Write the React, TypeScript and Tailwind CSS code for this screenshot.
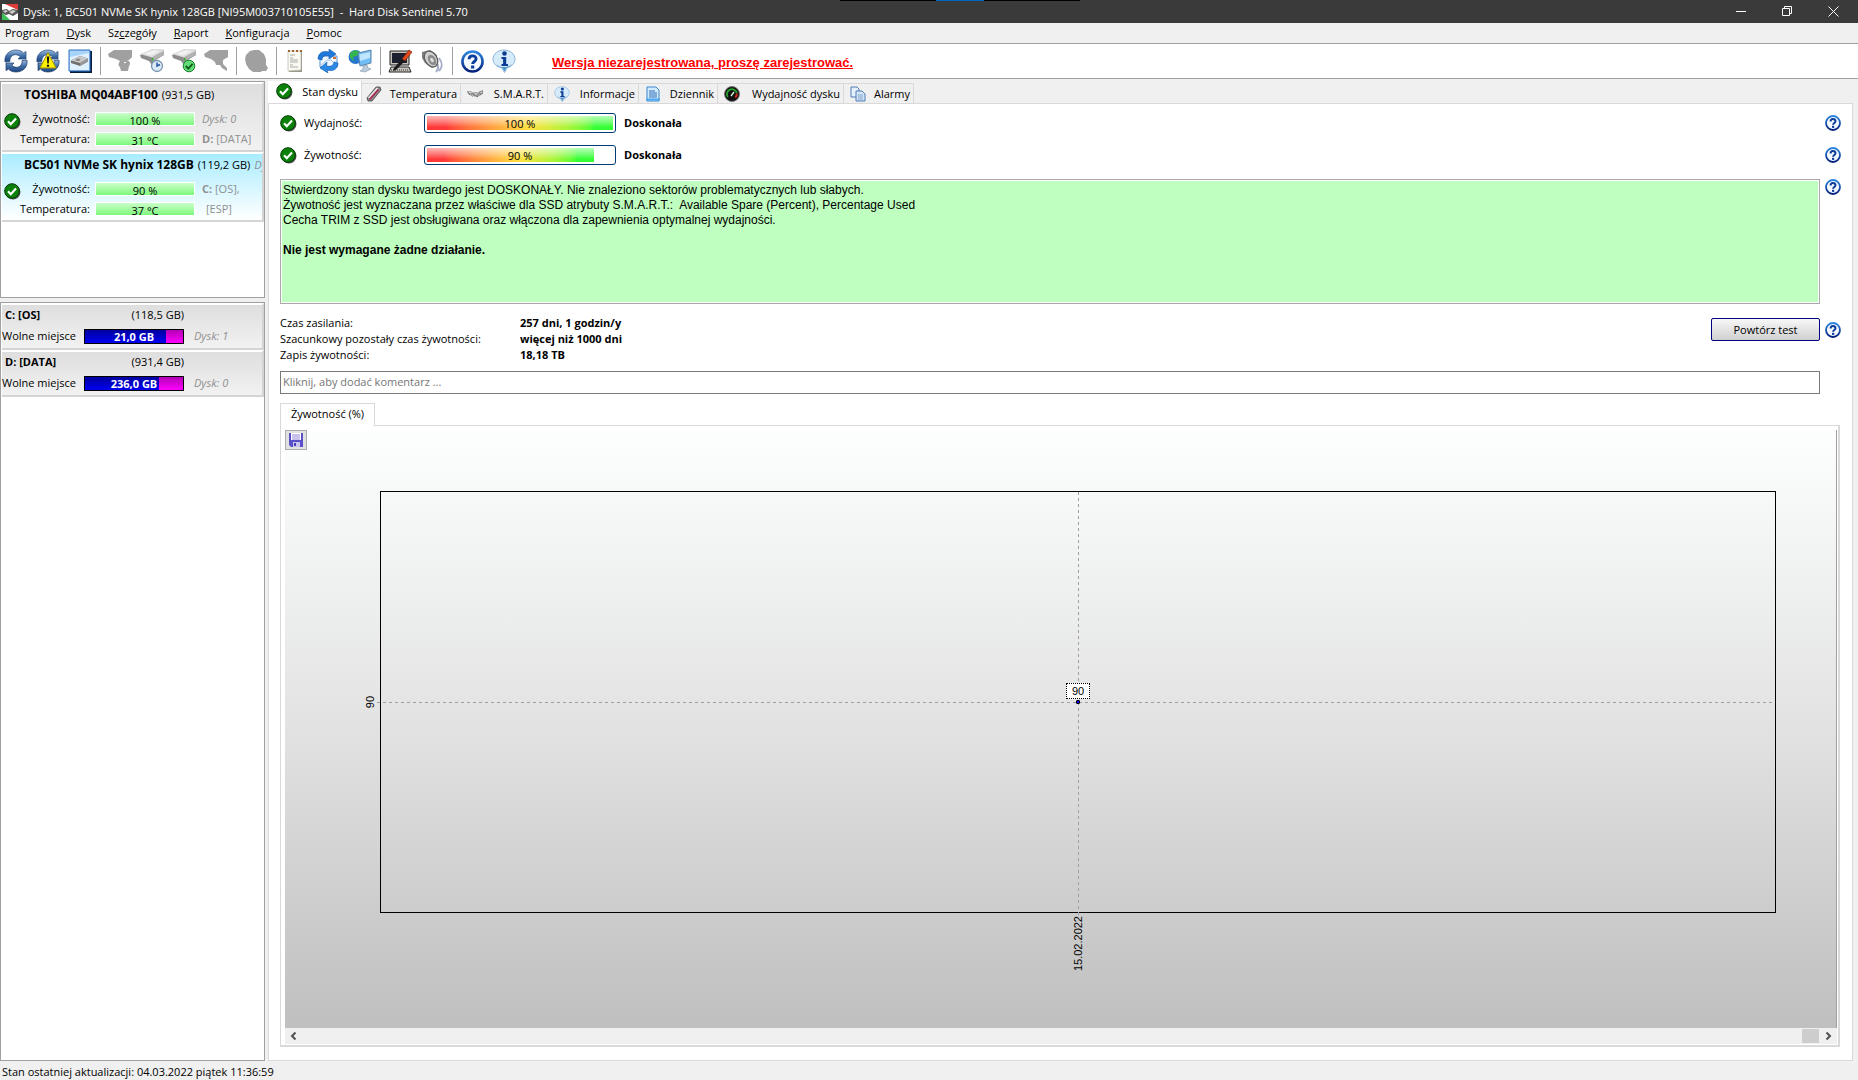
import React, { useState } from 'react';

interface DiskInfo {
  name: string;
  size: string;
  health: string;
  temp: string;
  extra?: string;
  side1: React.ReactNode;
  side2: React.ReactNode;
  selected?: boolean;
}

interface VolumeInfo {
  name: string;
  size: string;
  free: string;
  used: number;
  disk: string;
}

const DISKS: DiskInfo[] = [
  { name: 'TOSHIBA MQ04ABF100', size: '(931,5 GB)', health: '100 %', temp: '31 °C', side1: <i>Dysk: 0</i>, side2: <><b>D:</b> [DATA]</> },
  { name: 'BC501 NVMe SK hynix 128GB', size: '(119,2 GB)', health: '90 %', temp: '37 °C', extra: 'Dysk: 1', side1: <><b>C:</b> [OS],</>, side2: <span className="pl-1">[ESP]</span>, selected: true },
];

const VOLUMES: VolumeInfo[] = [
  { name: 'C: [OS]', size: '(118,5 GB)', free: '21,0 GB', used: 83, disk: 'Dysk: 1' },
  { name: 'D: [DATA]', size: '(931,4 GB)', free: '236,0 GB', used: 76, disk: 'Dysk: 0' },
];

// text before, underlined mnemonic, text after
const MENU = [
  ['Pro', 'g', 'ram'],
  ['', 'D', 'ysk'],
  ['Sz', 'c', 'zegóły'],
  ['', 'R', 'aport'],
  ['', 'K', 'onfiguracja'],
  ['', 'P', 'omoc'],
];

function CheckIcon() {
  return (
    <svg width="17" height="17" viewBox="0 0 17 17" className="shrink-0">
      <circle cx="9" cy="9" r="7.5" fill="#555" />
      <circle cx="8" cy="8" r="7.3" fill="#0a820a" stroke="#033803" />
      <path d="M4 8.2l2.8 3L12 5.6" fill="none" stroke="#fff" strokeWidth="2.2" />
    </svg>
  );
}

function HelpIcon({ size = 16 }: { size?: number }) {
  return (
    <svg width={size} height={size} viewBox="0 0 16 16" className="shrink-0">
      <defs>
        <linearGradient id="helpRing" x1="0" y1="0" x2="0" y2="1">
          <stop offset="0" stopColor="#2f86e0" />
          <stop offset="1" stopColor="#04207c" />
        </linearGradient>
      </defs>
      <circle cx="8" cy="8" r="7" fill="#f6faff" stroke="url(#helpRing)" strokeWidth="1.8" />
      <path d="M5.6 6.5c0-3.2 4.9-3.200 4.900-.2 0 1.700-2.400 1.700-2.400 3.500" fill="none" stroke="#0a3c9c" strokeWidth="2" />
      <rect x="7" y="10.800" width="2.200" height="2.100" fill="#0a3c9c" />
    </svg>
  );
}

function InfoIcon({ size = 16 }: { size?: number }) {
  return (
    <svg width={size} height={size} viewBox="0 0 24 24" className="shrink-0">
      <path d="M12 1c6 0 11 3.800 11 9 0 4.500-3.500 7.500-7.500 8.600L12.500 23.500 9.500 18.800C5 18 1 15 1 10c0-5.200 5-9 11-9z" fill="#d6ebfa" stroke="#8fb6d8" />
      <path d="M4 15.500c4 3.500 12 3.500 16-.5-1.500 2.500-3.500 3.200-5.500 3.700l-2 3.800-2.200-3.800C8 18.200 5.500 17.500 4 15.500z" fill="#4e93c9" />
      <circle cx="12.500" cy="4.500" r="2.300" fill="#0b3c94" />
      <path d="M9.500 8h4.700v7h1.800v2H9.500v-2h1.600v-5H9.500z" fill="#0b3c94" />
    </svg>
  );
}

function RefreshArrows() {
  return (
    <>
      <defs>
        <linearGradient id="arrowBlue" x1="0" y1="0" x2="0" y2="1">
          <stop offset="0" stopColor="#9dbbe0" />
          <stop offset=".5" stopColor="#3f6ea6" />
          <stop offset="1" stopColor="#1d4580" />
        </linearGradient>
      </defs>
      <path d="M1 13C0 6 5 1 12 1c3 0 6 1 7.500 3L22 2.500V10h-8l2.300-2.300C13.500 5 9 5 7 8c-1 1.500-1.200 3-1 4.500z" fill="url(#arrowBlue)" stroke="#24497c" strokeWidth=".7" />
      <path d="M23 11c1 7-4 12-11 12-3 0-6-1-7.500-3L2 21.500V14h8l-2.300 2.300C10.500 19 15 19 17 16c1-1.500 1.200-3 1-4.500z" fill="url(#arrowBlue)" stroke="#163463" strokeWidth=".7" />
    </>
  );
}

function DriveShape() {
  return (
    <>
      <path d="M0 6L13 0h10l1 2v4L14 12l-2 4-3-4-8-3z" fill="#8c8c8c" />
      <path d="M0 5L13 0h10l1 2-12 6.500z" fill="#dedede" />
      <path d="M4 5l9-3.500 7 .5-9 4.500z" fill="#f2f2f2" />
      <path d="M12 8.500L24 2v4l-12 6z" fill="#b2b2b2" />
      <path d="M12 9h1.500v2.500H12z" fill="#2db52d" />
    </>
  );
}

function ToolButton({ label, children }: { label: string; children: React.ReactNode }) {
  return (
    <button aria-label={label} className="flex h-8 w-8 items-center justify-center">
      <svg width="24" height="24" viewBox="0 0 24 24">{children}</svg>
    </button>
  );
}

function ToolSeparator() {
  return <div className="flex w-2 justify-center"><div className="h-7 w-px bg-[#a0a0a0]" /></div>;
}

function Toolbar() {
  return (
    <div className="flex h-9 shrink-0 items-center border-t border-b border-[#a0a0a0] bg-white">
      <ToolButton label="Odśwież"><RefreshArrows /></ToolButton>
      <ToolButton label="Odśwież ostrzeżenia">
        <RefreshArrows />
        <path d="M12 3.500L20 19H4z" fill="#fff200" stroke="#a49300" />
        <path d="M10.800 7.500h2.400l-.5 7h-1.400zM10.900 15.800h2.200v2h-2.200z" fill="#111" />
      </ToolButton>
      <ToolButton label="Dysk">
        <path d="M2 2h22v22H2z" fill="#0a1c3c" />
        <path d="M1 1h21v21H1z" fill="#a9d4fa" stroke="#2c6fc0" />
        <path d="M2 8l19-4v17H2z" fill="#dff0ff" />
        <path d="M3 11.500L12 7l8 2.500v3L12 17l-9-3z" fill="#6e6e6e" />
        <path d="M3 11.500L12 7l8 2.500L12 14z" fill="#c9c9c9" />
        <ellipse cx="10" cy="10.800" rx="2.500" ry="1.200" fill="#8e8e8e" />
        <path d="M12 14l8-4.500v3L12 17z" fill="#979797" />
      </ToolButton>
      <ToolSeparator />
      <ToolButton label="Test">
        <path d="M0 5L6 1h18v7l-3 3h-2c3 1 4 4 2 6l-1 5h-7l-1-4c-2-1-2-3 0-6L8 10 1 8z" fill="#a0a0a0" />
        <path d="M16 13h2v1h-2z" fill="#fff" />
      </ToolButton>
      <ToolButton label="Test krótki">
        <DriveShape />
        <circle cx="17" cy="17" r="5.500" fill="#dceaf7" stroke="#7893b0" strokeWidth="1.300" />
        <path d="M17 13.500V17l3-1.500" fill="none" stroke="#2658a0" strokeWidth="1.500" />
      </ToolButton>
      <ToolButton label="Test rozszerzony">
        <DriveShape />
        <circle cx="17" cy="17" r="5.800" fill="#62dc74" stroke="#178030" />
        <path d="M13.800 17l2.500 2.600 4.300-4.800" fill="none" stroke="#0e5c20" strokeWidth="1.900" />
      </ToolButton>
      <ToolButton label="Test powierzchni">
        <path d="M0 5L6 1h18v7l-5 3v4l4 4v3l-5-3-2-3h-4l-1-3-4-3L1 8z" fill="#a0a0a0" />
      </ToolButton>
      <ToolSeparator />
      <ToolButton label="Akustyka">
        <path d="M6 2l4-1h5l5 4 2 5v6l2 3-2 3h-4l-1 1H9l-4-3-3-5-1-5 1-4z" fill="#a0a0a0" />
      </ToolButton>
      <ToolSeparator />
      <ToolButton label="Raport">
        <path d="M5 3h13v20H5z" fill="#9a9a8a" />
        <path d="M4 2h13v19l-13 1z" fill="#fafaf2" stroke="#b5b5aa" strokeWidth=".7" />
        <path d="M4 2h2M8 2h2M12 2h2M16 2h2" stroke="#a0622d" strokeWidth="2" />
        <path d="M6 6h5M6 9h3M6 11h8M6 13h8M6 16h3M6 18h8" stroke="#a9a9a9" />
      </ToolButton>
      <ToolButton label="Wyślij raport">
        <path d="M4 7h17v11H4z" fill="#eef6ff" stroke="#5f92cf" />
        <path d="M5 16l6-5h4l5 5" fill="none" stroke="#a9c9ea" />
        <path d="M2 10C2 4 7 1 13 3V0l7 5-7 5V7C9 6 6 7 6 11z" fill="#1e78dc" stroke="#0d54a8" strokeWidth=".6" />
        <path d="M22 14c0 6-5 9-11 7l1 3-8-5 7-6-.500 4c4 1 7 0 7.500-4z" fill="#2a8ae8" stroke="#0d54a8" strokeWidth=".6" />
        <path d="M17 8h3v2h-3z" fill="#d66b2d" />
      </ToolButton>
      <ToolButton label="Sieć">
        <circle cx="7.500" cy="8" r="7" fill="#2676d0" />
        <path d="M2 4l5-3 5 2-3 4-4 1 1 4-4-3z" fill="#36b44e" />
        <path d="M10 4l13-3v13l-11 3z" fill="#6fbdf3" stroke="#5b84ab" />
        <path d="M11.500 5.500L22 3v6l-10 3z" fill="#c0e5ff" />
        <path d="M15 17l4-1 1 3 3 1-6 3-5-1 3-2z" fill="#bccbd9" stroke="#7c95ad" strokeWidth=".6" />
      </ToolButton>
      <ToolSeparator />
      <ToolButton label="Wygląd">
        <path d="M2 2h19v14H2z" fill="#c8c4bc" stroke="#222" />
        <path d="M4 4h15v10H4z" fill="#1c1f30" />
        <path d="M3 18h18l2 5H1z" fill="#c8c4bc" stroke="#222" />
        <path d="M3 21h18" stroke="#333" strokeDasharray="1 1" />
        <path d="M14 10l7-9 3 2-7 9z" fill="#e0481d" stroke="#7c2107" strokeWidth=".7" />
        <path d="M14 10l3 2-9 9-3 1 1-3z" fill="#1a1a1a" />
      </ToolButton>
      <ToolButton label="Dźwięk">
        <path d="M19 9c4 5 3 10 0 13M16 13c3 4 3 7 0 10" fill="none" stroke="#a7aecb" strokeWidth="2" />
        <path d="M2 3l8-2 7 5v11l-5 2-7-5-3-5z" fill="#7e7e7e" />
        <ellipse cx="11" cy="10" rx="6" ry="8.500" transform="rotate(-32 11 10)" fill="#cfcfcf" stroke="#5e5e5e" strokeWidth="1.300" />
        <ellipse cx="12" cy="11" rx="3.600" ry="5.500" transform="rotate(-32 12 11)" fill="#8a8a8a" />
        <ellipse cx="12" cy="11" rx="1.600" ry="2.500" transform="rotate(-32 12 11)" fill="#dedede" />
      </ToolButton>
      <ToolSeparator />
      <button aria-label="Pomoc" className="flex h-8 w-8 items-center justify-center"><HelpIcon size={23} /></button>
      <button aria-label="Informacje o programie" className="flex h-8 w-8 items-center justify-center"><InfoIcon size={24} /></button>
      <a href="#rejestracja" className="ml-8 pt-1 font-['Liberation_Sans',sans-serif] text-[13px] font-bold text-[#ff0000] underline">
        Wersja niezarejestrowana, proszę zarejestrować.
      </a>
    </div>
  );
}

function StatusBar({ value }: { value: string }) {
  return (
    <span className="flex h-[14px] items-center justify-center border border-white bg-linear-to-b from-[#c8ffc8] to-[#7cf87c] pt-0.5 leading-none">
      {value}
    </span>
  );
}

function DiskCard({ disk }: { disk: DiskInfo }) {
  return (
    <div className={`h-[70px] overflow-hidden border-r-2 border-b-2 border-t-2 border-[#d4d4d4] border-t-white whitespace-nowrap ${disk.selected ? 'bg-linear-to-b from-[#a8ecff] to-white' : 'bg-linear-to-b from-[#dedede] to-[#f2f2f2]'}`}>
      <div className="flex h-[21px] items-center gap-1 pl-[22px]">
        <b className="text-[12px]">{disk.name}</b>
        <span>{disk.size}</span>
        {disk.extra && <i className="text-[#909090]">{disk.extra}</i>}
      </div>
      <div className="flex items-center pt-1">
        <div className="w-[22px] pb-4 pl-0.5"><CheckIcon /></div>
        <div className="grid grow grid-cols-[68px_104px_1fr] items-center">
          <span className="flex h-5 items-center justify-end pr-0.5">Żywotność:</span>
          <span className="pr-px pl-[3px]"><StatusBar value={disk.health} /></span>
          <span className="pl-1.5 text-[#909090]">{disk.side1}</span>
          <span className="flex h-5 items-center justify-end pr-0.5">Temperatura:</span>
          <span className="pr-px pl-[3px]"><StatusBar value={disk.temp} /></span>
          <span className="pl-1.5 text-[#909090]">{disk.side2}</span>
        </div>
      </div>
    </div>
  );
}

function VolumeCard({ volume }: { volume: VolumeInfo }) {
  return (
    <div className="grid h-[47px] grid-cols-[82px_100px_1fr] grid-rows-[20px_22px] items-center border-t-2 border-r-2 border-b-2 border-[#d4d4d4] border-t-white bg-linear-to-b from-[#dedede] to-[#f2f2f2] whitespace-nowrap">
      <b className="pl-[3px]">{volume.name}</b>
      <span className="text-right">{volume.size}</span>
      <span />
      <span>Wolne miejsce</span>
      <div className="relative flex h-[15px] items-center justify-center border border-black bg-linear-to-b from-[#b400b4] to-[#ff00ff]">
        <div className="absolute inset-y-0 left-0 bg-linear-to-b from-[#0000a0] to-[#0000f0]" style={{ width: `${volume.used}%` }} />
        <b className="relative leading-none text-white">{volume.free}</b>
      </div>
      <i className="pl-[10px] text-[#909090]">{volume.disk}</i>
    </div>
  );
}

function ThermoIcon() {
  return (
    <svg width="16" height="16" viewBox="0 0 16 16">
      <path d="M1 12L10 1h4l1 3L6 15H2z" fill="#8a8a8a" stroke="#444" strokeWidth=".8" />
      <path d="M2.500 12L11.500 2" stroke="#ececec" strokeWidth="1.500" />
      <path d="M3.500 13.500L12.500 3.500" stroke="#b0285a" strokeWidth="1.800" />
    </svg>
  );
}

function SmartIcon() {
  return (
    <svg width="16" height="16" viewBox="0 0 16 16">
      <path d="M0 5l4 0 2 2-1 2-4-1zM5 7l4-1 4 2-3 3-4-1zM11 6l5-2v4l-3 1z" fill="#8a8a8a" />
      <path d="M1 5.500l3 0 1 1.500-2 .500zM7 7.500l2-.500 2 1-2 1zM12.500 6.500l2.500-1v1.500z" fill="#dcdcdc" />
      <path d="M2 8l4 2.500M10 11l4-2.500" stroke="#4a4a4a" strokeDasharray="1 1" />
    </svg>
  );
}

function LogIcon() {
  return (
    <svg width="16" height="16" viewBox="0 0 16 16">
      <path d="M2 1h9l3 3v11H2z" fill="#d3ebff" stroke="#3b87cf" />
      <path d="M4 5h6M4 7h8M4 9h8M4 11h8" stroke="#2f6db5" />
      <path d="M1 13.500h14" stroke="#4aa7f0" strokeWidth="2" />
    </svg>
  );
}

function GaugeIcon() {
  return (
    <svg width="16" height="16" viewBox="0 0 16 16">
      <circle cx="8" cy="8" r="7.500" fill="#111" stroke="#777" />
      <path d="M3.800 11A5 5 0 1 1 12.800 7" fill="none" stroke="#27a52c" strokeWidth="1.800" />
      <path d="M12.800 7.500a5 5 0 0 1-1.500 4" fill="none" stroke="#d42a1a" strokeWidth="2" />
      <path d="M7 10l3-4" stroke="#dfffdf" strokeWidth="1.300" />
    </svg>
  );
}

function CopyIcon() {
  return (
    <svg width="16" height="16" viewBox="0 0 16 16">
      <path d="M1 1h6l2 2v8H1z" fill="#e6f0fb" stroke="#4e7db5" />
      <path d="M6 5h6l3 3v7H6z" fill="#d4e5f7" stroke="#4e7db5" />
      <path d="M8 9h5M8 11h5M8 13h5" stroke="#7fa5d0" />
    </svg>
  );
}

const TABS = [
  { label: 'Stan dysku', icon: <CheckIcon />, size: 'w-[94px] pl-2' },
  { label: 'Temperatura', icon: <ThermoIcon />, size: 'w-[99px] pl-1' },
  { label: 'S.M.A.R.T.', icon: <SmartIcon />, size: 'w-[87px] pl-1.5' },
  { label: 'Informacje', icon: <InfoIcon />, size: 'w-[91px] pl-1.5' },
  { label: 'Dziennik', icon: <LogIcon />, size: 'w-[79px] pl-1.5' },
  { label: 'Wydajność dysku', icon: <GaugeIcon />, size: 'w-[126px] pl-1.5' },
  { label: 'Alarmy', icon: <CopyIcon />, size: 'w-[70px] pl-1.5' },
];

function Tabs() {
  const [active, setActive] = useState('Stan dysku');
  return (
    <div role="tablist" className="flex h-[22px] items-end whitespace-nowrap">
      {TABS.map(t => (
        <button key={t.label} role="tab" aria-selected={active === t.label} onClick={() => setActive(t.label)}
          className={`flex items-center justify-between border-r border-[#d9d9d9] pr-[3px] ${t.size} ${active === t.label ? '-mb-px h-[23px] bg-white pb-0.5' : 'h-5 border-t bg-[#f0f0f0]'}`}>
          {t.icon}
          <span>{t.label}</span>
        </button>
      ))}
    </div>
  );
}

function Meter({ label, value, text }: { label: string; value: number; text: string }) {
  return (
    <div className="flex h-8 items-center">
      <CheckIcon />
      <span className="w-[127px] pl-[7px]">{label}</span>
      <div className="relative h-5 w-48 rounded-[3px] border border-[#003c74] bg-white p-0.5">
        <div className="h-full bg-linear-to-r from-[#ff3838] from-10% via-[#ffe040] via-55% to-[#34ff34] to-90%" style={{ width: `${value}%` }}>
          <div className="h-full bg-linear-to-b from-white/65 via-white/35 via-40% to-transparent to-80%" />
        </div>
        <span className="absolute inset-0 flex items-center justify-center leading-none">{value} %</span>
      </div>
      <b className="pl-2">{text}</b>
      <button aria-label={`Pomoc: ${label}`} className="ml-auto"><HelpIcon /></button>
    </div>
  );
}

function LifeChart() {
  return (
    <div className="flex grow flex-col border-r border-[#a0a0a0] bg-linear-to-b from-[#fdffff] via-[#e2e2e2] to-[#bfbfbf]">
      <button aria-label="Zapisz" className="flex h-5 w-[22px] items-center justify-center border border-[#adadad] bg-[#e1e1e1]">
        <svg width="16" height="16" viewBox="0 0 16 16">
          <path d="M1 1h14v14H3l-2-2z" fill="#5a50c8" />
          <path d="M3 1h10v7H3z" fill="#fff" />
          <path d="M4 3h8M4 5h8M4 7h8" stroke="#8f88dd" />
          <path d="M5 10h7v5H5z" fill="#c9c5ee" />
          <path d="M6 11h2v3H6z" fill="#473db5" />
        </svg>
      </button>
      <div className="flex grow pt-[41px] pr-[60px] pb-[115px] pl-[95px]">
        <div className="relative grow border border-black font-['Liberation_Sans',sans-serif] text-[11px] leading-[14px]">
          <div className="absolute top-0 -bottom-1 left-1/2 w-px bg-[repeating-linear-gradient(to_bottom,#a0a0a0_0_3px,transparent_3px_6px)]" />
          <div className="absolute top-1/2 right-0 -left-1 h-px bg-[repeating-linear-gradient(to_right,#a0a0a0_0_3px,transparent_3px_6px)]" />
          <span className="absolute top-1/2 -left-[18px] -translate-y-1/2 rotate-180 [writing-mode:vertical-rl]">90</span>
          <span className="absolute bottom-1/2 left-1/2 mb-[3px] flex h-4 w-6 -translate-x-1/2 items-center justify-center border border-dotted border-black bg-white">90</span>
          <div className="absolute top-1/2 left-1/2 -mt-0.5 -ml-0.5 h-1 w-1 rounded-[1px] border border-black bg-[#0000ff]" />
          <span className="absolute top-full left-1/2 mt-1 -translate-x-1/2 rotate-180 [writing-mode:vertical-rl]">15.02.2022</span>
        </div>
      </div>
    </div>
  );
}

export default function App() {
  const [comment, setComment] = useState('');

  return (
    <div className="flex h-screen flex-col overflow-hidden bg-[#f0f0f0] font-['Open_Sans','Noto_Sans',sans-serif] text-[11px] leading-4 text-black">
      <header className="relative flex h-[23px] shrink-0 items-center bg-[#3a3a3a] pl-0.5 text-white">
        <svg width="16" height="16" viewBox="0 0 16 16">
          <path d="M0 0h16v16H0z" fill="#fff" />
          <path d="M3 0h13v6z" fill="#e23b3b" />
          <path d="M0 8l8 8H0z" fill="#3fbf5a" />
          <path d="M0 6l5-1 2 2 4-2 5 1v3l-5 3-4-2-3 1-4-2z" fill="#555" />
          <path d="M1 7l3-1 2 1-3 2zM7 8l4-2 3 1-4 3z" fill="#ccc" />
        </svg>
        <h1 className="pl-[5px] whitespace-pre">Dysk: 1, BC501 NVMe SK hynix 128GB [NI95M003710105E55]  -  Hard Disk Sentinel 5.70</h1>
        <div className="absolute top-0 left-[45%] flex pl-1">
          <div className="h-px w-24 bg-black" />
          <div className="h-px w-12 bg-[#0067c0]" />
          <div className="h-px w-24 bg-black" />
        </div>
        <div className="mr-0.5 ml-auto flex">
          <button aria-label="Minimalizuj" className="flex h-5 w-[46px] items-center justify-center">
            <svg width="11" height="11" viewBox="0 0 11 11"><path d="M0 5.500h10" stroke="#fff" /></svg>
          </button>
          <button aria-label="Przywróć" className="flex h-5 w-[46px] items-center justify-center">
            <svg width="11" height="11" viewBox="0 0 11 11" fill="none" stroke="#fff"><path d="M.5 2.500h7v7h-7zM2.500 2.500v-2h7v7h-2" /></svg>
          </button>
          <button aria-label="Zamknij" className="flex h-5 w-[46px] items-center justify-center">
            <svg width="11" height="11" viewBox="0 0 11 11" stroke="#fff"><path d="M.5.500l10 10M10.500.500l-10 10" /></svg>
          </button>
        </div>
      </header>

      <nav className="flex h-5 shrink-0 items-center gap-[17px] pl-[5px]">
        {MENU.map(([before, mark, after]) => (
          <button key={mark + after}>{before}<u>{mark}</u>{after}</button>
        ))}
      </nav>

      <Toolbar />

      <div className="flex min-h-0 grow">
        <aside className="flex w-[265px] shrink-0 flex-col gap-1 pt-0.5">
          <section className="h-[217px] border border-[#a0a0a0] bg-white pl-px">
            {DISKS.map(d => <DiskCard key={d.name} disk={d} />)}
          </section>
          <section className="grow border border-[#a0a0a0] bg-white pl-px">
            {VOLUMES.map(v => <VolumeCard key={v.name} volume={v} />)}
          </section>
        </aside>

        <main className="ml-[3px] flex min-w-0 grow flex-col pt-0.5 pr-[5px]">
          <Tabs />
          <div className="flex grow flex-col border border-[#d9d9d9] bg-white pt-[3px] pr-[11px] pb-[13px] pl-[11px]">
            <Meter label="Wydajność:" value={100} text="Doskonała" />
            <Meter label="Żywotność:" value={90} text="Doskonała" />

            <div className="mt-2 flex items-start gap-[5px]">
              <div className="h-[125px] grow border border-[#a9a9a9] bg-[#bfffbf] px-0.5 pt-[3px] font-['Liberation_Sans',sans-serif] text-[12px] leading-[15px] whitespace-pre-wrap shadow-[inset_0_0_0_1px_#fff]">
                <p>Stwierdzony stan dysku twardego jest DOSKONAŁY. Nie znaleziono sektorów problematycznych lub słabych.</p>
                <p>Żywotność jest wyznaczana przez właściwe dla SSD atrybuty S.M.A.R.T.:  Available Spare (Percent), Percentage Used</p>
                <p>Cecha TRIM z SSD jest obsługiwana oraz włączona dla zapewnienia optymalnej wydajności.</p>
                <p className="pt-[15px] font-bold">Nie jest wymagane żadne działanie.</p>
              </div>
              <button aria-label="Pomoc: opis"><HelpIcon /></button>
            </div>

            <div className="mt-[11px] flex items-start">
              <dl className="grid grid-cols-[240px_1fr] leading-4">
                <dt>Czas zasilania:</dt>
                <dd className="font-bold">257 dni, 1 godzin/y</dd>
                <dt>Szacunkowy pozostały czas żywotności:</dt>
                <dd className="font-bold">więcej niż 1000 dni</dd>
                <dt>Zapis żywotności:</dt>
                <dd className="font-bold">18,18 TB</dd>
              </dl>
              <div className="ml-auto flex items-center gap-[5px] pt-[3px]">
                <button className="h-[23px] w-[109px] rounded-[2px] border border-[#000080] bg-linear-to-b from-[#f8f8f8] to-[#d0d0d0]">Powtórz test</button>
                <button aria-label="Pomoc: test"><HelpIcon /></button>
              </div>
            </div>

            <input aria-label="Komentarz" value={comment} onChange={e => setComment(e.target.value)} placeholder="Kliknij, aby dodać komentarz ..."
              className="mt-2 mr-[21px] h-[23px] border border-[#7a7a7a] bg-white px-0.5 pb-0.5 outline-none placeholder:text-[#757575]" />

            <button role="tab" aria-selected="true" className="relative mt-[9px] -mb-px h-[23px] w-[95px] border border-b-0 border-[#d9d9d9] bg-white pb-0.5">Żywotność (%)</button>
            <div className="mr-px flex grow flex-col border-t border-r-2 border-b-2 border-l border-[#d9d9d9] pt-1 pr-px pb-px pl-1">
              <LifeChart />
              <div className="flex h-4 items-center bg-[#f0f0f0]">
                <button aria-label="Przewiń w lewo" className="flex w-4 justify-center">
                  <svg width="7" height="8" viewBox="0 0 7 8"><path d="M5.500 0.500L2 4l3.500 3.500" fill="none" stroke="#505050" strokeWidth="2" /></svg>
                </button>
                <div className="ml-auto h-[14px] w-[17px] bg-[#cdcdcd]" />
                <button aria-label="Przewiń w prawo" className="flex w-[18px] justify-center">
                  <svg width="7" height="8" viewBox="0 0 7 8"><path d="M1.500 0.500L5 4 1.500 7.500" fill="none" stroke="#505050" strokeWidth="2" /></svg>
                </button>
              </div>
            </div>
          </div>
        </main>
      </div>

      <footer className="flex h-[19px] shrink-0 items-center pt-0.5 pl-0.5">Stan ostatniej aktualizacji: 04.03.2022 piątek 11:36:59</footer>
    </div>
  );
}
